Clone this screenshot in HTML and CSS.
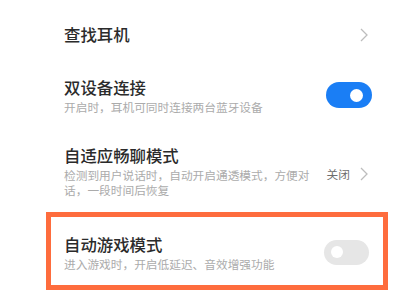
FILE: index.html
```html
<!DOCTYPE html>
<html lang="zh-CN">
<head>
<meta charset="utf-8">
<link rel="stylesheet" href="styles.css">
</head>
<body>
<div class="list">
  <div class="row row-first">
    <div class="text"><div class="title">查找耳机</div></div>
    <svg class="chev" width="8" height="14" viewBox="0 0 8 14"><path d="M1 1 L7 7 L1 13" fill="none" stroke="#bdbdbd" stroke-width="1.3"/></svg>
  </div>
  <div class="row">
    <div class="text">
      <div class="title">双设备连接</div>
      <div class="desc">开启时，耳机可同时连接两台蓝牙设备</div>
    </div>
    <div class="toggle on"><span class="knob"></span></div>
  </div>
  <div class="row">
    <div class="text">
      <div class="title">自适应畅聊模式</div>
      <div class="desc">检测到用户说话时，自动开启通透模式，方便对话，一段时间后恢复</div>
    </div>
    <div class="right">
      <span class="value">关闭</span>
      <svg class="chev" width="8" height="14" viewBox="0 0 8 14"><path d="M1 1 L7 7 L1 13" fill="none" stroke="#bdbdbd" stroke-width="1.3"/></svg>
    </div>
  </div>
  <div class="row highlight">
    <div class="text">
      <div class="title">自动游戏模式</div>
      <div class="desc">进入游戏时，开启低延迟、音效增强功能</div>
    </div>
    <div class="toggle off"><span class="knob"></span></div>
  </div>
</div>
</body>
</html>
```
FILE: styles.css
```css
html, body {
  margin: 0;
  padding: 0;
  background: #ffffff;
  width: 400px;
  height: 300px;
  overflow: hidden;
}
body {
  font-family: "Noto Sans CJK SC", "Noto Sans", sans-serif;
}
.list {
  padding: 8px 12px 0 46px;
  display: flex;
  flex-direction: column;
}
.row {
  display: flex;
  align-items: center;
  justify-content: space-between;
  padding: 15px 16px 15px 18px;
}
.row-first {
  padding-bottom: 15px;
}
.text {
  display: flex;
  flex-direction: column;
}
.title {
  font-size: 16.4px;
  line-height: 23px;
  font-weight: 500;
  color: #2b2b2b;
}
.desc {
  font-size: 11.7px;
  line-height: 15px;
  color: #ababab;
  max-width: 250px;
  margin-top: 0;
}
.chev {
  display: block;
  margin-right: 4px;
}
.right {
  display: flex;
  align-items: center;
  gap: 10px;
  margin-top: 6px;
}
.value {
  font-size: 11.7px;
  color: #6e6e6e;
}
.toggle {
  width: 46px;
  height: 26px;
  border-radius: 13px;
  display: flex;
  align-items: center;
  box-sizing: border-box;
}
.toggle.on {
  background: #1a7ef5;
  justify-content: flex-end;
  padding-right: 9px;
}
.toggle.off {
  width: 45px;
  height: 25px;
  background: #e6e6e6;
  padding-left: 7px;
}
.knob {
  width: 13px;
  height: 13px;
  border-radius: 50%;
  background: #ffffff;
}
.toggle.off .knob {
  width: 12px;
  height: 12px;
}
.highlight {
  border: 5px solid #fe6c3d;
  padding: 16px 14px 14px 13px;
}
```
